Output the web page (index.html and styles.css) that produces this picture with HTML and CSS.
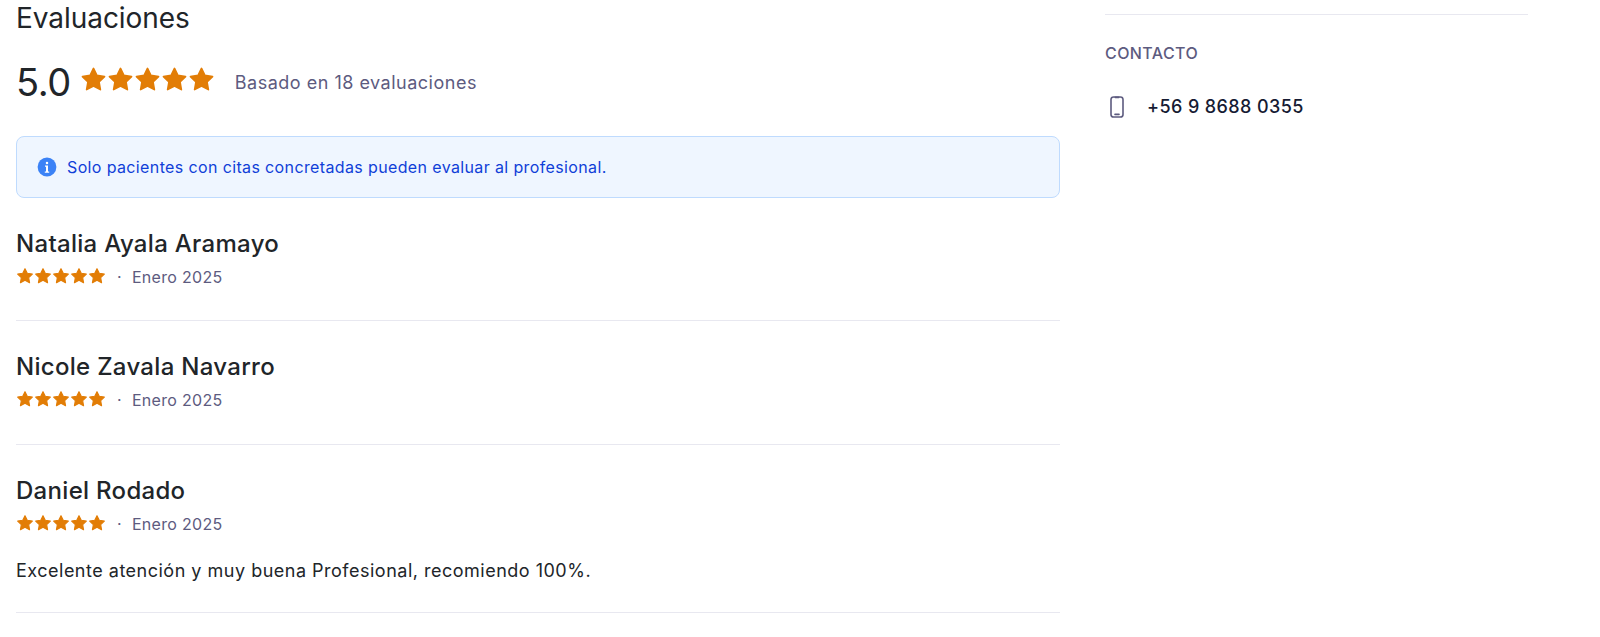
FILE: index.html
```html
<!DOCTYPE html>
<html lang="es">
<head>
<meta charset="utf-8">
<title>Evaluaciones</title>
<link rel="stylesheet" href="styles.css">
</head>
<body>
<svg class="defs" width="0" height="0" aria-hidden="true"><defs><symbol id="star" viewBox="0 0 24 24"><path d="M12 2.2l3 6.2 6.8 1-4.9 4.8 1.2 6.8L12 17.8 5.9 21l1.2-6.8L2.2 9.4l6.8-1z" stroke="#e27d06" stroke-width="1.5" stroke-linejoin="round"/></symbol></defs></svg>
<div class="page">
  <main class="main">
    <h2 class="title">Evaluaciones</h2>
    <div class="summary">
      <span class="score">5.0</span>
      <span class="stars stars-lg"><svg><use href="#star"/></svg><svg><use href="#star"/></svg><svg><use href="#star"/></svg><svg><use href="#star"/></svg><svg><use href="#star"/></svg></span>
      <span class="based">Basado en 18 evaluaciones</span>
    </div>
    <div class="alert">
      <svg class="info" viewBox="0 0 20 20"><circle cx="10" cy="10" r="9.4" fill="#3b82f6"/><circle cx="10" cy="5.9" r="1.25" fill="#fff"/><path d="M8 8.6h3v6h1.2v1.2H7.8v-1.2H9V9.8H8z" fill="#fff"/></svg>
      <span>Solo pacientes con citas concretadas pueden evaluar al profesional.</span>
    </div>
    <article class="review">
      <h3 class="name">Natalia Ayala Aramayo</h3>
      <div class="meta"><span class="stars stars-sm"><svg><use href="#star"/></svg><svg><use href="#star"/></svg><svg><use href="#star"/></svg><svg><use href="#star"/></svg><svg><use href="#star"/></svg></span><span class="dot">·</span><span>Enero 2025</span></div>
    </article>
    <article class="review">
      <h3 class="name">Nicole Zavala Navarro</h3>
      <div class="meta"><span class="stars stars-sm"><svg><use href="#star"/></svg><svg><use href="#star"/></svg><svg><use href="#star"/></svg><svg><use href="#star"/></svg><svg><use href="#star"/></svg></span><span class="dot">·</span><span>Enero 2025</span></div>
    </article>
    <article class="review">
      <h3 class="name">Daniel Rodado</h3>
      <div class="meta"><span class="stars stars-sm"><svg><use href="#star"/></svg><svg><use href="#star"/></svg><svg><use href="#star"/></svg><svg><use href="#star"/></svg><svg><use href="#star"/></svg></span><span class="dot">·</span><span>Enero 2025</span></div>
      <p class="comment">Excelente atención y muy buena Profesional, recomiendo 100%.</p>
    </article>
  </main>
  <aside class="side">
    <div class="side-rule"></div>
    <h4 class="side-title">CONTACTO</h4>
    <div class="contact">
      <svg class="phone" viewBox="0 0 16 22" fill="none" stroke="#5d5b7f" stroke-width="1.6"><rect x="2" y="1" width="12" height="20" rx="2.6"/><path d="M6.3 1.4h3.4M6 18.4h4" stroke-linecap="round"/></svg>
      <span>+56 9 8688 0355</span>
    </div>
  </aside>
</div>
</body>
</html>
```
FILE: styles.css
```css
* { box-sizing: border-box; }
html, body { margin: 0; padding: 0; background: #fff; height: 637px; overflow: hidden; }
body { font-family: Inter, "Liberation Sans", sans-serif; color: #212529; }
.defs { position: absolute; }
.page { display: flex; gap: 45px; padding: 0 72px 0 16px; }
.main { width: 1044px; flex: none; }
.side { width: 423px; flex: none; padding-top: 14px; }
.title { margin: 0; font-size: 28px; line-height: 36px; font-weight: 400; letter-spacing: -.05px; }
.summary { display: flex; align-items: center; margin-top: 26px; height: 40px; }
.score { font-size: 38px; line-height: 40px; font-weight: 400; letter-spacing: -.4px; }
.stars { display: inline-flex; }
.stars svg { display: block; fill: #e27d06; }
.stars-lg { margin: 0 0 5px 9px; }
.stars-lg svg { width: 27px; height: 27px; }
.based { margin-left: 20px; font-size: 18px; letter-spacing: .5px; color: #5d5b7f; }
.alert { display: flex; align-items: center; gap: 10px; height: 62px; margin-top: 34px; padding: 0 20px; background: #eff6ff; border: 1px solid #bfdbfe; border-radius: 8px; color: #0f3fd8; font-size: 16px; letter-spacing: .37px; }
.info { width: 20px; height: 20px; flex: none; }
.review { padding: 30px 0 30.3px; border-bottom: 1px solid #e8e8f0; }
.name { margin: 0; font-size: 24px; line-height: 32px; font-weight: 500; letter-spacing: .3px; }
.meta { display: flex; align-items: center; margin: 5px 0 1px; height: 24px; font-size: 16px; letter-spacing: .3px; color: #5d5b7f; }
.stars-sm { margin-bottom: 2px; }
.stars-sm svg { width: 18px; height: 18px; }
.dot { margin: 0 10px 0 11px; }
.comment { margin: 23px 0 -1px; font-size: 18px; line-height: 24px; letter-spacing: .5px; }
.side-rule { height: 1px; background: #e8e8f0; }
.side-title { margin: 26px 0 0; font-size: 16px; line-height: 24px; font-weight: 500; letter-spacing: .4px; color: #5d5b7f; }
.contact { display: flex; align-items: center; margin-top: 28px; font-size: 18px; line-height: 28px; font-weight: 500; letter-spacing: .4px; color: #161b33; }
.phone { width: 16px; height: 22px; margin-left: 4px; margin-right: 22px; }
```
